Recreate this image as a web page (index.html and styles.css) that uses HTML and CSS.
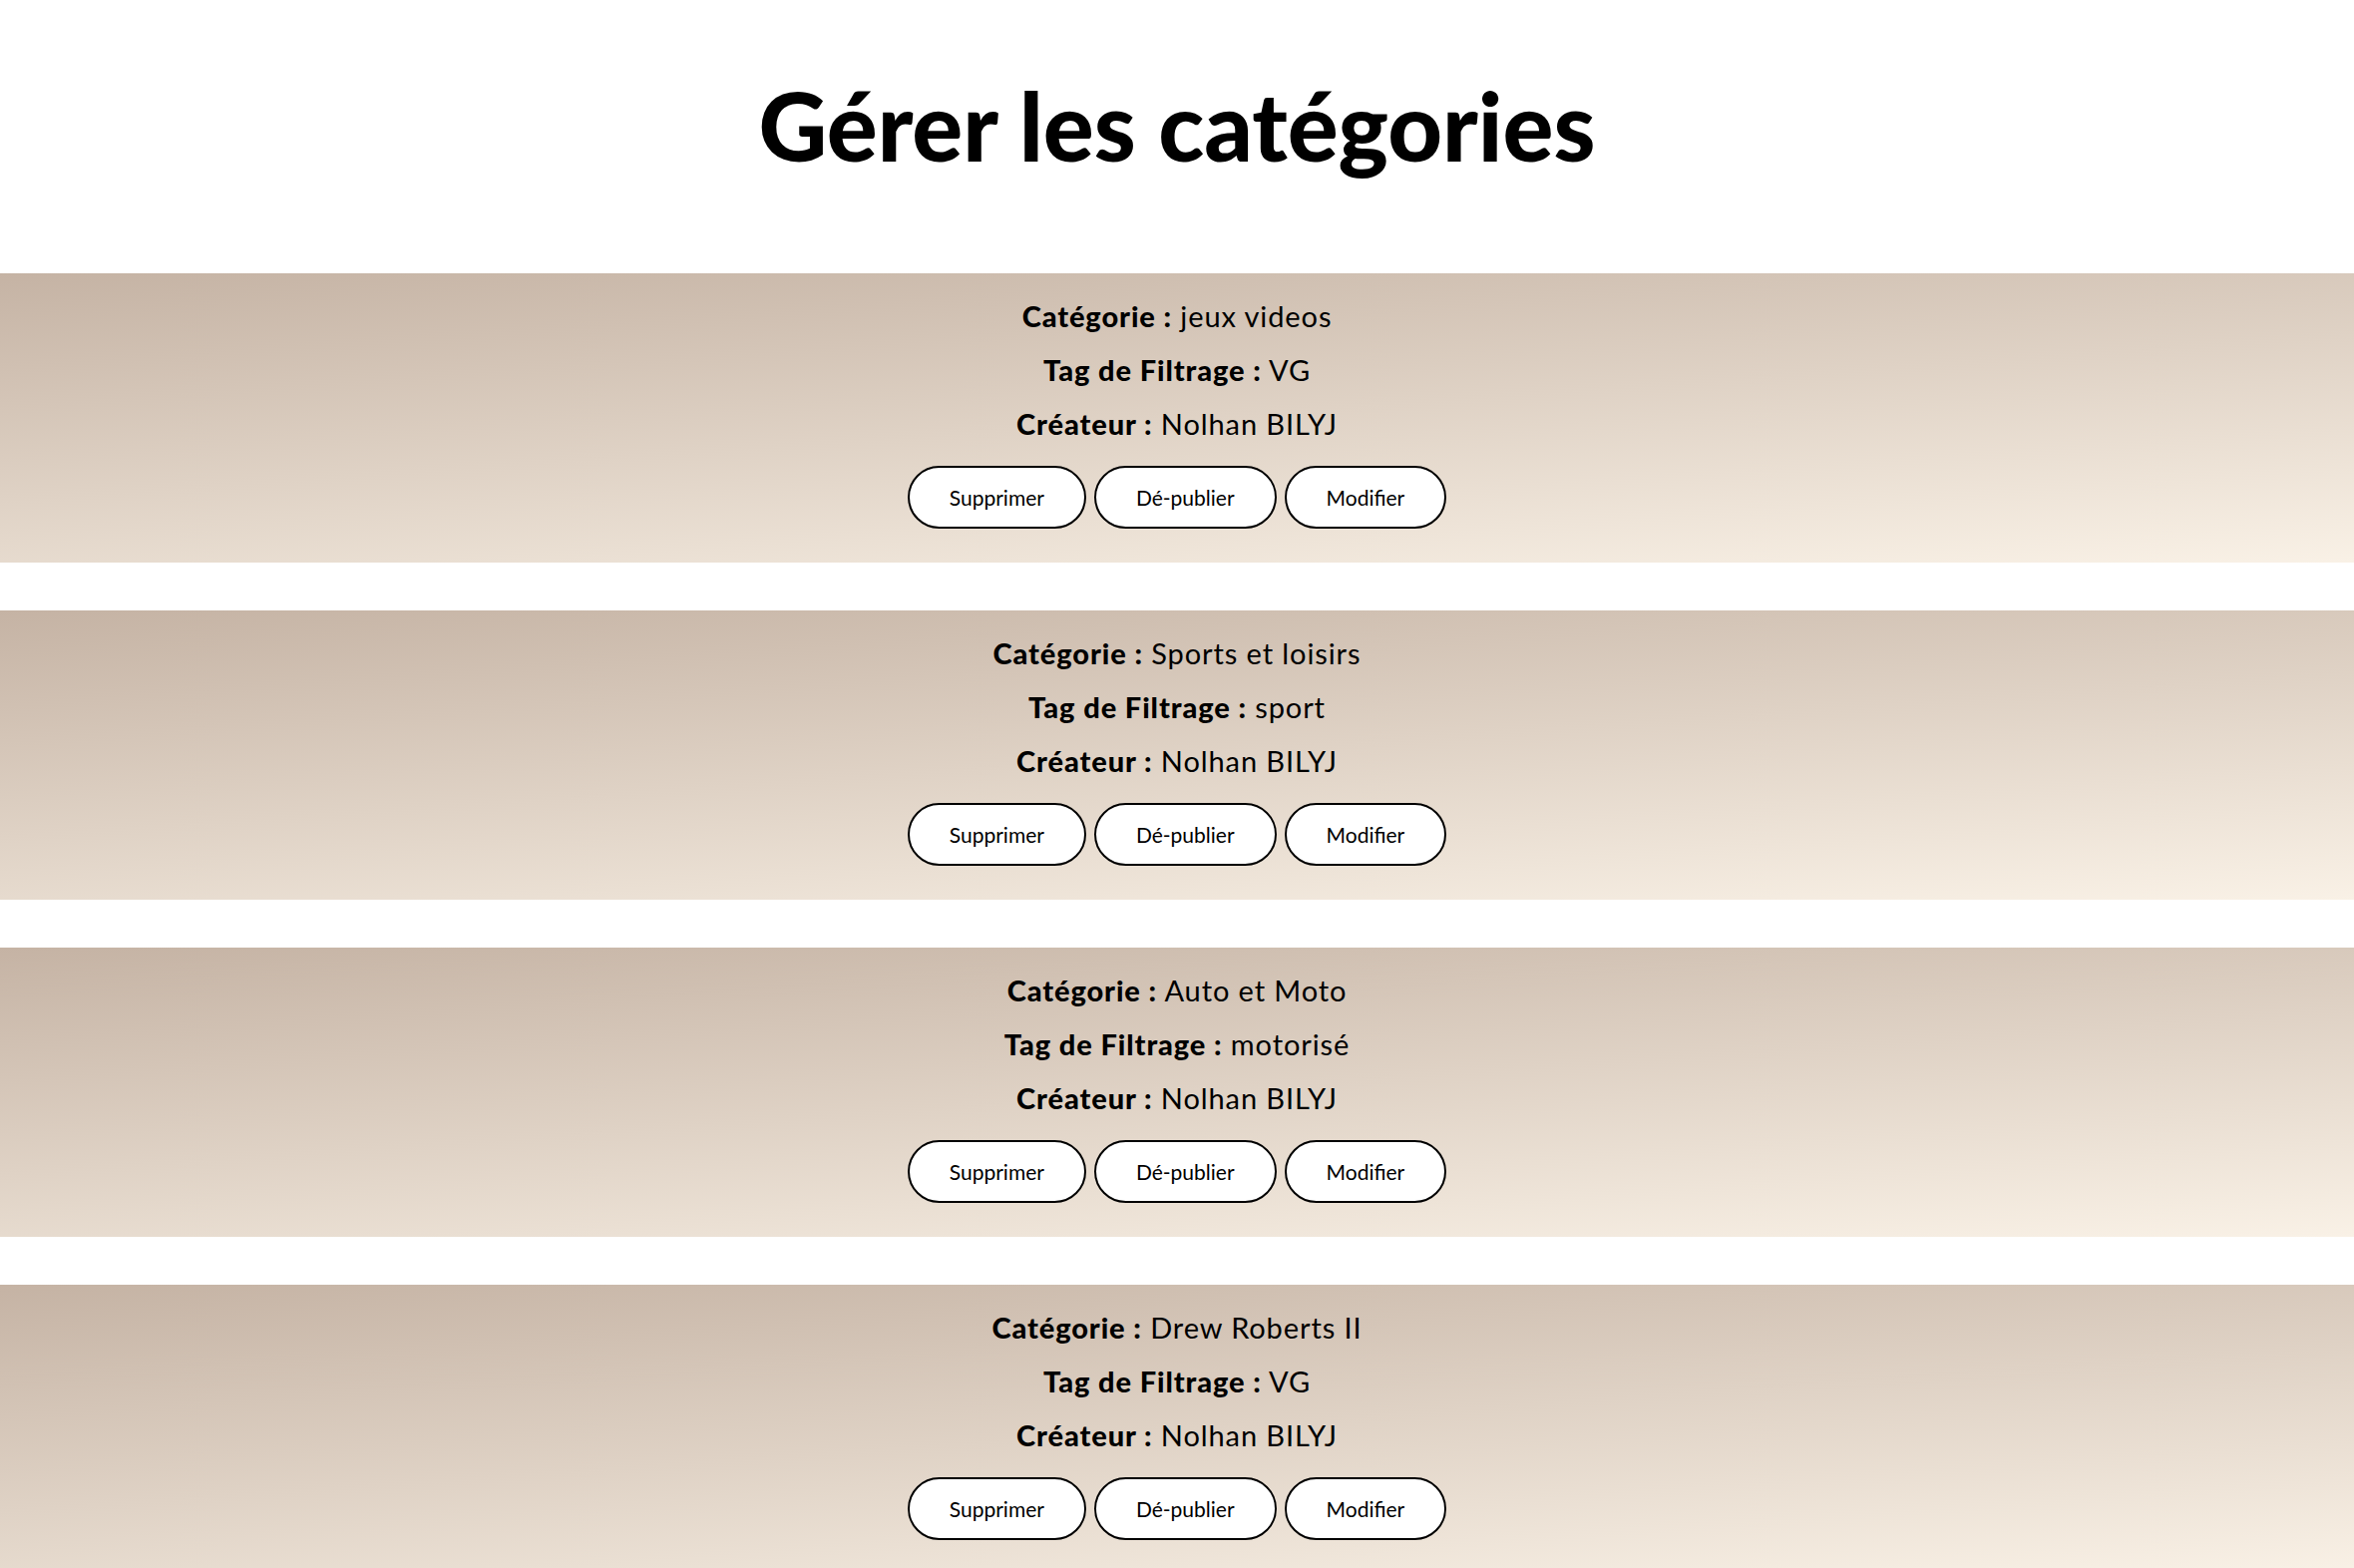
FILE: index.html
```html
<!DOCTYPE html>
<html lang="fr">
<head>
<meta charset="utf-8">
<title>Gérer les catégories</title>
<link rel="stylesheet" href="styles.css">
</head>
<body>
<header class="page-header">
  <h1 class="page-title">Gérer les catégories</h1>
</header>
<main class="category-list">
  <section class="category-card">
    <p class="info"><strong>Catégorie :</strong> jeux videos</p>
    <p class="info"><strong>Tag de Filtrage :</strong> VG</p>
    <p class="info"><strong>Créateur :</strong> Nolhan BILYJ</p>
    <div class="actions">
      <button class="btn">Supprimer</button>
      <button class="btn">Dé-publier</button>
      <button class="btn">Modifier</button>
    </div>
  </section>
  <section class="category-card">
    <p class="info"><strong>Catégorie :</strong> Sports et loisirs</p>
    <p class="info"><strong>Tag de Filtrage :</strong> sport</p>
    <p class="info"><strong>Créateur :</strong> Nolhan BILYJ</p>
    <div class="actions">
      <button class="btn">Supprimer</button>
      <button class="btn">Dé-publier</button>
      <button class="btn">Modifier</button>
    </div>
  </section>
  <section class="category-card">
    <p class="info"><strong>Catégorie :</strong> Auto et Moto</p>
    <p class="info"><strong>Tag de Filtrage :</strong> motorisé</p>
    <p class="info"><strong>Créateur :</strong> Nolhan BILYJ</p>
    <div class="actions">
      <button class="btn">Supprimer</button>
      <button class="btn">Dé-publier</button>
      <button class="btn">Modifier</button>
    </div>
  </section>
  <section class="category-card">
    <p class="info"><strong>Catégorie :</strong> Drew Roberts II</p>
    <p class="info"><strong>Tag de Filtrage :</strong> VG</p>
    <p class="info"><strong>Créateur :</strong> Nolhan BILYJ</p>
    <div class="actions">
      <button class="btn">Supprimer</button>
      <button class="btn">Dé-publier</button>
      <button class="btn">Modifier</button>
    </div>
  </section>
</main>
</body>
</html>
```

FILE: styles.css
```css
html, body {
  margin: 0;
  padding: 0;
  background: #ffffff;
  color: #000000;
  font-family: "Lato", "Noto Sans", sans-serif;
}

.page-header {
  display: flex;
  justify-content: center;
  padding-top: 71px;
  padding-bottom: 95px;
}

.page-title {
  margin: 0;
  font-size: 95px;
  line-height: 108px;
  font-weight: 900;
  letter-spacing: 0;
}

.category-list {
  display: flex;
  flex-direction: column;
  gap: 48px;
}

.category-card {
  display: flex;
  flex-direction: column;
  align-items: center;
  height: 290px;
  box-sizing: border-box;
  padding-top: 16px;
  background: linear-gradient(176deg, #c5b3a4 0%, #f9f1e6 100%);
}

.info {
  margin: 0;
  font-size: 29px;
  line-height: 54px;
  font-weight: 400;
  letter-spacing: 0.9px;
}

.info strong {
  font-weight: 900;
}

.actions {
  display: flex;
  gap: 8px;
  margin-top: 15px;
}

.btn {
  height: 63px;
  padding: 0 40px;
  border: 2px solid #000000;
  border-radius: 32px;
  background: #ffffff;
  color: #000000;
  font-family: "Lato", "Noto Sans", sans-serif;
  font-size: 21px;
  font-weight: 400;
  cursor: pointer;
}
```
